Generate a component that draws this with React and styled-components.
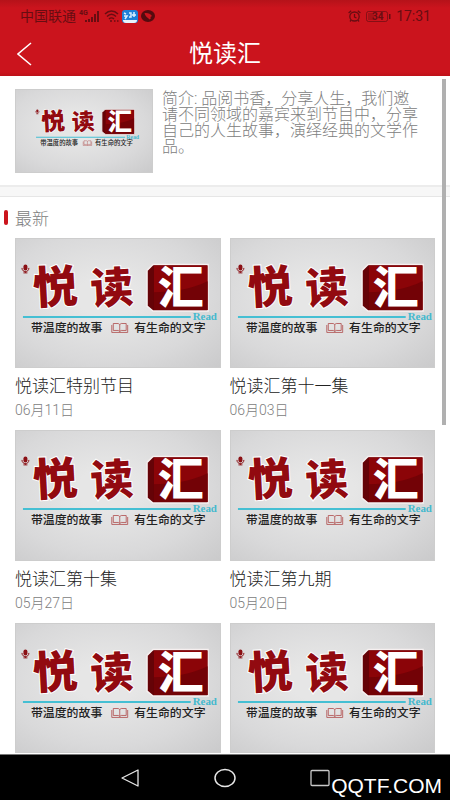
import React from "react";
import styled, { createGlobalStyle } from "styled-components";

const GlobalStyle = createGlobalStyle`
  * {
    box-sizing: border-box;
  }
  body {
    margin: 0;
    background: #fff;
    font-family: Roboto, "Noto Sans CJK SC", sans-serif;
  }
  h1, h2, h3, p {
    margin: 0;
    font-weight: 400;
  }
  button {
    padding: 0;
    border: 0;
    background: none;
  }
  svg {
    display: block;
  }
`;

const Screen = styled.div`
  height: 100vh;
  display: flex;
  flex-direction: column;
`;

const TopArea = styled.header`
  flex: none;
  background: linear-gradient(#b51219, #cb141d 8px, #cb141d 72px, #bd1118);
`;

const StatusBar = styled.div`
  display: flex;
  align-items: center;
  justify-content: space-between;
  height: 32px;
  padding: 0 19px 0 20px;
  color: #680d12;
  font-size: 14px;
  line-height: 20px;
`;

const StatusGroup = styled.div`
  display: flex;
  align-items: center;
  gap: ${(props) => props.$gap || "3px"};
`;

const TitleBar = styled.div`
  display: grid;
  grid-template-columns: 48px 1fr 48px;
  align-items: center;
  height: 44px;
`;

const BackButton = styled.button`
  height: 44px;
  padding-left: 17px;
`;

const PageTitle = styled.h1`
  color: #fff;
  font-size: 24px;
  line-height: 44px;
  text-align: center;
`;

const Content = styled.main`
  position: relative;
  flex: 1;
  min-height: 0;
  overflow: hidden;
`;

const ScrollThumb = styled.div`
  position: absolute;
  top: 3px;
  right: 4px;
  width: 4px;
  height: 51%;
  background: #b0b0b0;
`;

const Intro = styled.section`
  display: flex;
  gap: 9px;
  padding: 13px 28px 12px 15px;
`;

const IntroText = styled.p`
  flex: 1;
  padding-top: 2px;
  color: #808080;
  font-size: 16px;
  font-weight: 300;
  line-height: 16px;
`;

const Divider = styled.div`
  height: 12px;
  background: #f7f7f7;
  border-top: 2px solid #ececec;
  border-bottom: 1px solid #e6e6e6;
`;

const SectionTitle = styled.h2`
  display: flex;
  align-items: center;
  gap: 7px;
  height: 41px;
  padding-left: 4px;
  color: #808080;
  font-size: 17px;
  font-weight: 300;
  &::before {
    content: "";
    width: 4px;
    height: 15px;
    border-radius: 2px;
    background: #cb141d;
  }
`;

const Grid = styled.div`
  display: grid;
  grid-template-columns: 1fr 1fr;
  gap: 10px 9px;
  padding: 0 15px;
`;

const Thumb = styled.div`
  flex: none;
  width: ${(props) => props.$width || "100%"};
  aspect-ratio: ${(props) => props.$ratio || "205 / 130"};
  overflow: hidden;
  background: radial-gradient(ellipse at 45% 45%, #e6e6e6 20%, #d9d9da 65%, #cacacb);
  border: 1px solid #cdcdcd;
  svg {
    width: 100%;
    height: 100%;
  }
`;

const CardTitle = styled.h3`
  padding-top: 4px;
  color: #222;
  font-size: 17px;
  font-weight: 300;
  line-height: 28px;
`;

const CardDate = styled.p`
  color: #808080;
  font-size: 14px;
  font-weight: 300;
  line-height: 20px;
`;

const NavBar = styled.nav`
  position: relative;
  flex: none;
  display: flex;
  justify-content: center;
  align-items: center;
  gap: 74px;
  height: 46px;
  background: #000;
  border-top: 1px solid #777;
`;

const Watermark = styled.span`
  position: absolute;
  right: 8px;
  bottom: 2px;
  color: #fff;
  font-family: "Liberation Sans", sans-serif;
  font-size: 21px;
  line-height: 24px;
`;

const episodes = [
  { title: "悦读汇特别节目", date: "06月11日" },
  { title: "悦读汇第十一集", date: "06月03日" },
  { title: "悦读汇第十集", date: "05月27日" },
  { title: "悦读汇第九期", date: "05月20日" },
];

function Cover({ viewBox = "0 0 205 130" }) {
  const cjk = '"Noto Sans CJK SC", sans-serif';
  return (
    <svg viewBox={viewBox} preserveAspectRatio="xMidYMid slice">
      <rect x="7.5" y="26" width="4" height="6" rx="2" fill="#8b1015" />
      <path d="M6 29.500c0 5 7 5 7 0M9.500 33v1.500M7.500 34.500h4" fill="none" stroke="#8b1015" />
      <g fill="#920a10" stroke="#fff" strokeWidth="2" paintOrder="stroke" fontFamily={cjk} fontWeight="900">
        <text x="17" y="65" fontSize="45" transform="rotate(-3 38 50)">悦</text>
        <text x="75" y="65" fontSize="43" transform="rotate(-3 96 50)">读</text>
      </g>
      <path d="M138 26h55.500v47H138l-6-5V32z" fill="#650307" stroke="#f6f0f0" strokeWidth="1.500" />
      <path d="M139 27h54v45h-54z" fill="#8b0408" />
      <path d="M139 54c18 0 38-3 54-11v29h-54z" fill="#730206" />
      <text x="143" y="66" fontSize="46" fontWeight="900" fill="#fff" fontFamily={cjk}>汇</text>
      <path d="M7 79h169" stroke="#45bfd3" strokeWidth="2" />
      <text x="178" y="82" fontSize="11" fontWeight="700" fill="#45b9ce" fontFamily='"Liberation Serif", serif'>Read</text>
      <g fontSize="12" fontWeight="500" fill="#222" fontFamily={cjk}>
        <text x="15" y="94">带温度的故事</text>
        <text x="119" y="94">有生命的文字</text>
      </g>
      <path
        d="M98 85.500h5l1.500 1 1.500-1h5v7h-5l-1.500 1-1.500-1h-5zM104.500 86.500v7M96.500 87v7.500h16V87"
        fill="none"
        stroke="#ae4a4a"
        strokeWidth=".8"
      />
    </svg>
  );
}

function SignalIcon() {
  return (
    <svg width="22" height="14" viewBox="0 0 22 14" fill="currentColor">
      <text x="0" y="6" fontSize="7" fontWeight="700">4G</text>
      <path d="M6 11h2v2H6zM9 10h2v3H9zM12 8h2v5h-2zM15 5h2v8h-2zM18 2h2v11h-2z" />
    </svg>
  );
}

function WifiIcon() {
  return (
    <svg width="15" height="12" viewBox="0 0 15 12" fill="none" stroke="currentColor" strokeWidth="1.500">
      <path d="M1 4c4-4 9-4 13 0M3 6.500c3-3 6-3 9 0M5 9c1.500-1.500 3.500-1.500 5 0" />
      <path d="M6 11h2M10 11h1.500M13 11h1.500" />
    </svg>
  );
}

function AppIcon() {
  return (
    <svg width="16" height="13" viewBox="0 0 16 13">
      <rect width="16" height="13" rx="3" fill="#1e80d8" />
      <path d="M2 3l2 1M2 6h3l-2 3M7 3h2v4H7M12 2v5M10 5h4" stroke="#d9f0ff" strokeWidth="1.500" fill="none" />
      <path d="M1 10h14a3 3 0 0 1-3 3H4a3 3 0 0 1-3-3z" fill="#e9f3fb" />
    </svg>
  );
}

function BirdIcon() {
  return (
    <svg width="14" height="12" viewBox="0 0 14 12">
      <ellipse cx="7" cy="6" rx="7" ry="6" fill="#540b0f" />
      <path d="M3.500 3c3-.5 6 .5 7.500 3L9.500 7l.3 1.500L8.500 9.500 7 8C5.500 7 4 5.500 3.500 3z" fill="#cb141d" />
    </svg>
  );
}

function AlarmIcon() {
  return (
    <svg width="13" height="12" viewBox="0 0 13 12" fill="none" stroke="currentColor" strokeWidth="1.300">
      <ellipse cx="6.500" cy="6.500" rx="4.700" ry="4.500" />
      <path d="M6.500 4v3l2 1M.6 3l2.600-2.200M12.400 3L9.800.8M3 10.200l-1 1.300M10 10.200l1 1.300" />
    </svg>
  );
}

function BatteryIcon() {
  return (
    <svg width="25" height="11" viewBox="0 0 25 11">
      <rect x=".5" y=".5" width="21" height="10" rx="2" fill="none" stroke="currentColor" opacity=".7" />
      <rect x="2" y="2" width="6" height="7" fill="currentColor" opacity=".35" />
      <path d="M23 3h1.500v5H23z" fill="currentColor" />
      <text x="6" y="9" fontSize="10" fontWeight="700" fill="currentColor">34</text>
    </svg>
  );
}

function EpisodeCard({ title, date }) {
  return (
    <article>
      <Thumb>
        <Cover />
      </Thumb>
      {title && <CardTitle>{title}</CardTitle>}
      {date && <CardDate>{date}</CardDate>}
    </article>
  );
}

export default function App() {
  return (
    <>
      <GlobalStyle />
      <Screen>
        <TopArea>
          <StatusBar>
            <StatusGroup>
              <span>中国联通</span>
              <SignalIcon />
              <WifiIcon />
              <AppIcon />
              <BirdIcon />
            </StatusGroup>
            <StatusGroup $gap="5px">
              <AlarmIcon />
              <BatteryIcon />
              <span>17:31</span>
            </StatusGroup>
          </StatusBar>
          <TitleBar>
            <BackButton aria-label="返回">
              <svg width="15" height="24" viewBox="0 0 15 24" fill="none" stroke="#fff" strokeWidth="1.500">
                <path d="M14 1L1 12l13 11" />
              </svg>
            </BackButton>
            <PageTitle>悦读汇</PageTitle>
          </TitleBar>
        </TopArea>
        <Content>
          <Intro>
            <Thumb $width="138px" $ratio="138 / 84">
              <Cover viewBox="-31 -12 258 158" />
            </Thumb>
            <IntroText>
              简介: 品阅书香，分享人生，我们邀请不同领域的嘉宾来到节目中，分享自己的人生故事，演绎经典的文学作品。
            </IntroText>
          </Intro>
          <Divider />
          <SectionTitle>最新</SectionTitle>
          <Grid>
            {episodes.map((item) => (
              <EpisodeCard key={item.date} title={item.title} date={item.date} />
            ))}
            <EpisodeCard />
            <EpisodeCard />
          </Grid>
          <ScrollThumb />
        </Content>
        <NavBar>
          <button aria-label="后退">
            <svg width="20" height="20" viewBox="0 0 20 20" fill="none" stroke="#e8e8e8" strokeWidth="1.300">
              <path d="M18 2v16L2 10z" strokeLinejoin="round" />
            </svg>
          </button>
          <button aria-label="主页">
            <svg width="22" height="20" viewBox="0 0 22 20" fill="none" stroke="#e8e8e8" strokeWidth="1.500">
              <ellipse cx="11" cy="10" rx="10" ry="8.500" />
            </svg>
          </button>
          <button aria-label="最近任务">
            <svg width="20" height="20" viewBox="0 0 20 20" fill="none" stroke="#c8c8c8" strokeWidth="1.300">
              <rect x="1" y="2.500" width="18" height="15" rx="1" />
            </svg>
          </button>
          <Watermark>QQTF.COM</Watermark>
        </NavBar>
      </Screen>
    </>
  );
}
